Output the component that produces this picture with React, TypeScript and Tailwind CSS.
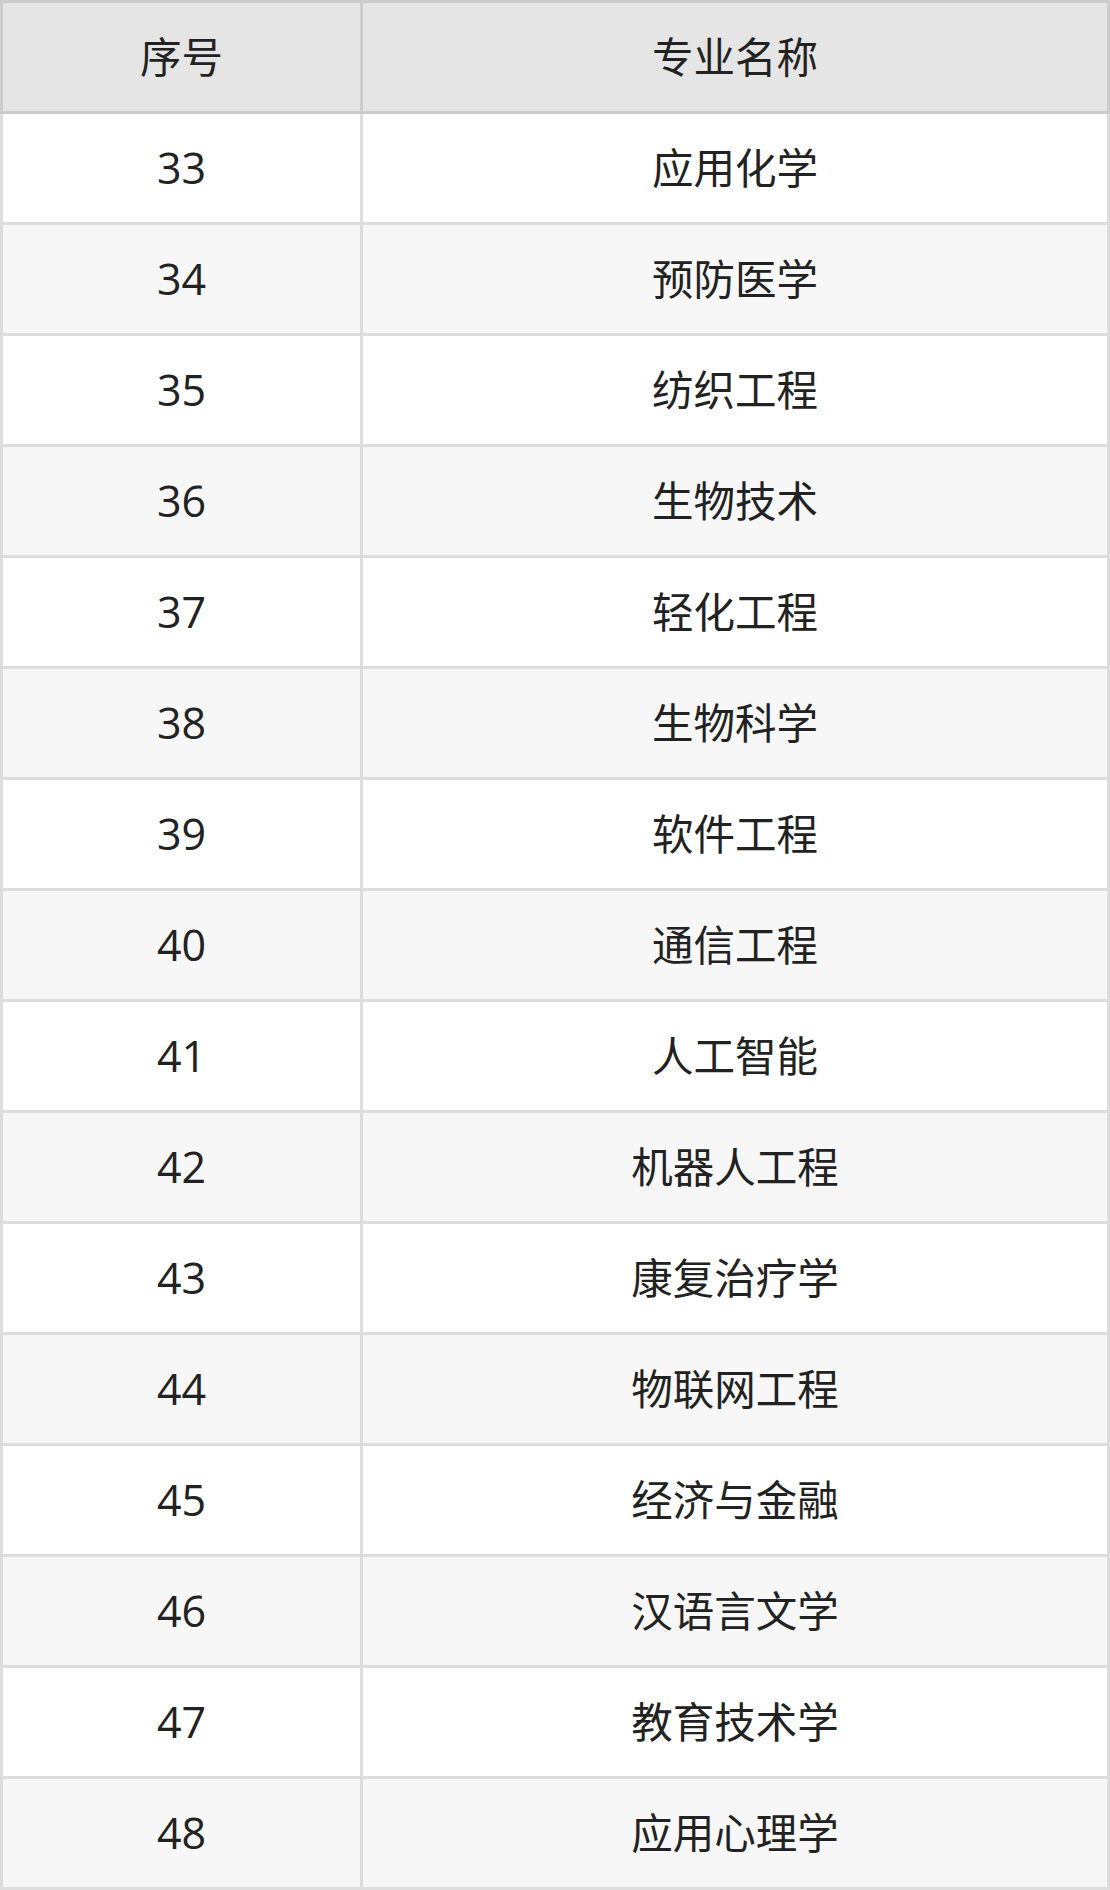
const majors = [
    [33, "应用化学"],
    [34, "预防医学"],
    [35, "纺织工程"],
    [36, "生物技术"],
    [37, "轻化工程"],
    [38, "生物科学"],
    [39, "软件工程"],
    [40, "通信工程"],
    [41, "人工智能"],
    [42, "机器人工程"],
    [43, "康复治疗学"],
    [44, "物联网工程"],
    [45, "经济与金融"],
    [46, "汉语言文学"],
    [47, "教育技术学"],
    [48, "应用心理学"],
] as const;

const font = {fontFamily: '"Open Sans", "Noto Sans CJK SC", sans-serif'};

const App = () => {
    return (
        <div className="w-[1110px] text-[43px] text-[#222]" style={font}>
            <div className="flex border-[3px] border-[#ccc] bg-[#e5e5e5]">
                <div className="w-[357px] h-[108px] flex items-center justify-center text-[41.5px]">序号</div>
                <div className="flex-1 h-[108px] border-l-[3px] border-[#ccc] flex items-center justify-center text-[41.5px]">
                    专业名称
                </div>
            </div>
            {majors.map(([num, name], i) => (
                <div
                    key={num}
                    className={
                        "flex border-x-[3px] border-b-[3px] border-[#ddd] " +
                        (i % 2 === 1 ? "bg-[#f7f7f7]" : "bg-white")
                    }
                >
                    <div className="w-[357px] h-[108px] flex items-center justify-center">{num}</div>
                    <div className="flex-1 h-[108px] border-l-[3px] border-[#ddd] flex items-center justify-center text-[41.5px]">
                        {name}
                    </div>
                </div>
            ))}
        </div>
    );
};

export default App;
